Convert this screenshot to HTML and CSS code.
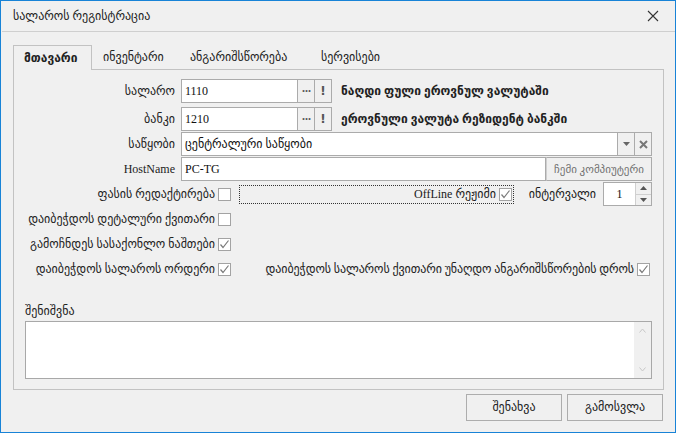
FILE: index.html
```html
<!DOCTYPE html>
<html lang="ka">
<head>
<meta charset="utf-8">
<title>სალაროს რეგისტრაცია</title>
<link rel="stylesheet" href="styles.css">
</head>
<body>
<div class="window">
  <div class="titlebar">
    <span class="title">სალაროს რეგისტრაცია</span>
    <svg class="close" width="12" height="12" viewBox="0 0 12 12"><path d="M1 1L11 11M11 1L1 11" stroke="#333" stroke-width="1.1" fill="none"/></svg>
  </div>
  <div class="content">
    <div class="tabs">
      <div class="tab tab-main active">მთავარი</div>
      <div class="tab tab-inv">ინვენტარი</div>
      <div class="tab tab-acc">ანგარიშსწორება</div>
      <div class="tab tab-srv">სერვისები</div>
    </div>
    <div class="panel">
      <div class="form">
        <div class="row row-first">
          <label class="lbl">სალარო</label>
          <div class="field short">
            <span class="val">1110</span>
          </div>
          <span class="btn-sm dots">···</span>
          <span class="btn-sm excl">!</span>
          <span class="note-bold">ნაღდი ფული ეროვნულ ვალუტაში</span>
        </div>
        <div class="row">
          <label class="lbl">ბანკი</label>
          <div class="field short">
            <span class="val">1210</span>
          </div>
          <span class="btn-sm dots">···</span>
          <span class="btn-sm excl">!</span>
          <span class="note-bold">ეროვნული ვალუტა რეზიდენტ ბანკში</span>
        </div>
        <div class="row">
          <label class="lbl">საწყობი</label>
          <div class="field wide">
            <span class="val">ცენტრალური საწყობი</span>
          </div>
          <span class="btn-sm arrow"><svg width="7" height="4" viewBox="0 0 7 4"><path d="M0 0H7L3.5 4Z" fill="#666"/></svg></span>
          <span class="btn-sm clear"><svg width="9" height="9" viewBox="0 0 9 9"><path d="M1 1L8 8M8 1L1 8" stroke="#777" stroke-width="2" fill="none"/></svg></span>
        </div>
        <div class="row">
          <label class="lbl">HostName</label>
          <div class="field wide">
            <span class="val">PC-TG</span>
          </div>
          <span class="addon">ჩემი კომპიუტერი</span>
        </div>
        <div class="row row-check">
          <span class="clbl">ფასის რედაქტირება</span>
          <span class="cb"></span>
          <div class="offline">
            <span class="offline-text">OffLine რეჟიმი</span>
            <span class="cb checked"><svg width="11" height="11" viewBox="0 0 11 11"><path d="M1.5 5.5L4 8.5L9.5 1.5" stroke="#7a7a7a" stroke-width="1.2" fill="none"/></svg></span>
          </div>
          <span class="interval-lbl">ინტერვალი</span>
          <div class="spinner">
            <span class="spin-val">1</span>
            <div class="spin-btns">
              <span class="spin-up"><svg width="7" height="4" viewBox="0 0 7 4"><path d="M0 4H7L3.5 0Z" fill="#555"/></svg></span>
              <span class="spin-down"><svg width="7" height="4" viewBox="0 0 7 4"><path d="M0 0H7L3.5 4Z" fill="#555"/></svg></span>
            </div>
          </div>
        </div>
        <div class="row row-check">
          <span class="clbl">დაიბეჭდოს დეტალური ქვითარი</span>
          <span class="cb"></span>
        </div>
        <div class="row row-check">
          <span class="clbl">გამოჩნდეს სასაქონლო ნაშთები</span>
          <span class="cb checked"><svg width="11" height="11" viewBox="0 0 11 11"><path d="M1.5 5.5L4 8.5L9.5 1.5" stroke="#7a7a7a" stroke-width="1.2" fill="none"/></svg></span>
        </div>
        <div class="row row-check">
          <span class="clbl">დაიბეჭდოს სალაროს ორდერი</span>
          <span class="cb checked"><svg width="11" height="11" viewBox="0 0 11 11"><path d="M1.5 5.5L4 8.5L9.5 1.5" stroke="#7a7a7a" stroke-width="1.2" fill="none"/></svg></span>
          <span class="right-check">
            <span class="rlbl">დაიბეჭდოს სალაროს ქვითარი უნაღდო ანგარიშსწორების დროს</span>
            <span class="cb checked"><svg width="11" height="11" viewBox="0 0 11 11"><path d="M1.5 5.5L4 8.5L9.5 1.5" stroke="#7a7a7a" stroke-width="1.2" fill="none"/></svg></span>
          </span>
        </div>
      </div>
      <div class="notes">
        <div class="notes-lbl">შენიშვნა</div>
        <div class="textarea">
          <div class="text-body"></div>
          <div class="vscroll">
            <svg width="7" height="5" viewBox="0 0 7 5"><path d="M0.5 4.5L3.5 1L6.5 4.5" stroke="#c8c8c8" fill="none"/></svg>
            <svg width="7" height="5" viewBox="0 0 7 5"><path d="M0.5 0.5L3.5 4L6.5 0.5" stroke="#c8c8c8" fill="none"/></svg>
          </div>
        </div>
      </div>
    </div>
    <div class="footer">
      <span class="button">შენახვა</span>
      <span class="button">გამოსვლა</span>
    </div>
  </div>
</div>
</body>
</html>
```

FILE: styles.css
```css
* { box-sizing: border-box; }
html, body { margin: 0; padding: 0; }
body {
  width: 676px;
  height: 433px;
  overflow: hidden;
  font-family: "Liberation Serif", "DejaVu Sans", sans-serif;
  font-size: 12px;
  color: #1a1a1a;
  background: #f0f0f0;
}
.window {
  width: 676px;
  height: 433px;
  border: 1px solid #1883d7;
  background: #f0f0f0;
  display: flex;
  flex-direction: column;
}
.titlebar {
  height: 31px;
  flex: none;
  display: flex;
  align-items: center;
  justify-content: space-between;
  padding: 0 16px 0 11px;
  border-bottom: 1px solid #cfcfcf;
  margin-left: 1px;
}
.title { font-size: 12px; color: #222; }
.close { display: block; }
.content {
  flex: 1;
  display: flex;
  flex-direction: column;
  padding: 13px 12px 0 12px;
}
.tabs {
  display: flex;
  height: 25px;
  margin-bottom: -1px;
}
.tab {
  padding-left: 11px;
  line-height: 24px;
  color: #222;
}
.tab.active {
  border: 1px solid #c2c2c2;
  border-bottom: none;
  background: #f0f0f0;
  font-weight: bold;
  position: relative;
  z-index: 1;
  padding-left: 10px;
}
.tab-main { width: 79px; }
.tab-inv { width: 87px; }
.tab-acc { width: 131px; }
.tab-srv { width: 80px; }

.panel {
  height: 321px;
  width: 651px;
  border: 1px solid #c2c2c2;
  display: flex;
  flex-direction: column;
  padding: 0 11px 10px 0;
}
.form {
  display: flex;
  flex-direction: column;
  gap: 1px;
}
.row {
  display: flex;
  align-items: center;
  height: 24px;
}
.row-first { margin-top: 9px; margin-bottom: 3px; }
.lbl {
  width: 167px;
  flex: none;
  text-align: right;
  padding-right: 6px;
  color: #222;
}
.field {
  height: 24px;
  background: #fff;
  border: 1px solid #ababab;
  display: flex;
  align-items: center;
  padding-left: 3px;
  color: #111;
}
.short { width: 117px; }
.wide { flex: 1; }
.val { white-space: nowrap; }
.btn-sm {
  width: 17px;
  height: 24px;
  flex: none;
  border: 1px solid #ababab;
  border-left: none;
  background: #f0f0f0;
  display: flex;
  align-items: center;
  justify-content: center;
  color: #555;
  font-weight: bold;
}
.dots { font-size: 12px; letter-spacing: -1px; }
.excl { font-family: "DejaVu Sans", sans-serif; font-size: 12px; }
.note-bold {
  margin-left: 9px;
  font-weight: bold;
  color: #222;
  white-space: nowrap;
}
.row .addon {
  width: 106px;
  height: 24px;
  flex: none;
  border: 1px solid #ababab;
  border-left: 1px solid #cfcfcf;
  display: flex;
  align-items: center;
  justify-content: center;
  color: #707070;
  font-size: 11px;
  white-space: nowrap;
}
.clbl {
  width: 204px;
  flex: none;
  text-align: right;
  padding-right: 3px;
  white-space: nowrap;
  color: #222;
}
.cb {
  width: 13px;
  height: 13px;
  flex: none;
  border: 1px solid #a3a3a3;
  background: #fff;
  display: flex;
  align-items: center;
  justify-content: center;
}
.cb svg { display: block; }
.offline {
  margin-left: 8px;
  width: 275px;
  height: 19px;
  border: 1px dotted #333;
  display: flex;
  align-items: center;
  justify-content: flex-end;
  padding-right: 1px;
  gap: 3px;
}
.interval-lbl {
  margin-left: auto;
  margin-right: 7px;
}
.spinner {
  width: 49px;
  height: 24px;
  border: 1px solid #ababab;
  background: #fff;
  display: flex;
}
.spin-val {
  flex: 1;
  display: flex;
  align-items: center;
  justify-content: center;
  color: #111;
}
.spin-btns {
  width: 16px;
  display: flex;
  flex-direction: column;
  border-left: 1px solid #cfcfcf;
  background: #f0f0f0;
}
.spin-up, .spin-down {
  flex: 1;
  display: flex;
  align-items: center;
  justify-content: center;
}
.spin-up { border-bottom: 1px solid #cfcfcf; }
.right-check {
  margin-left: auto;
  margin-right: 2px;
  display: flex;
  align-items: center;
  gap: 3px;
}
.rlbl { white-space: nowrap; color: #222; letter-spacing: -0.1px; }

.notes {
  margin-top: auto;
  padding-left: 11px;
}
.notes-lbl {
  height: 17px;
  line-height: 14px;
  color: #222;
}
.textarea {
  height: 58px;
  border: 1px solid #a8a8a8;
  background: #fff;
  display: flex;
}
.text-body { flex: 1; }
.vscroll {
  width: 17px;
  background: #f0f0f0;
  display: flex;
  flex-direction: column;
  justify-content: space-between;
  align-items: center;
  padding: 6px 0 6px;
}
.footer {
  display: flex;
  justify-content: flex-end;
  gap: 5px;
  margin-top: 4px;
}
.button {
  width: 96px;
  height: 27px;
  border: 1px solid #adadad;
  background: #f0f0f0;
  display: flex;
  align-items: center;
  justify-content: center;
  color: #222;
}
```
